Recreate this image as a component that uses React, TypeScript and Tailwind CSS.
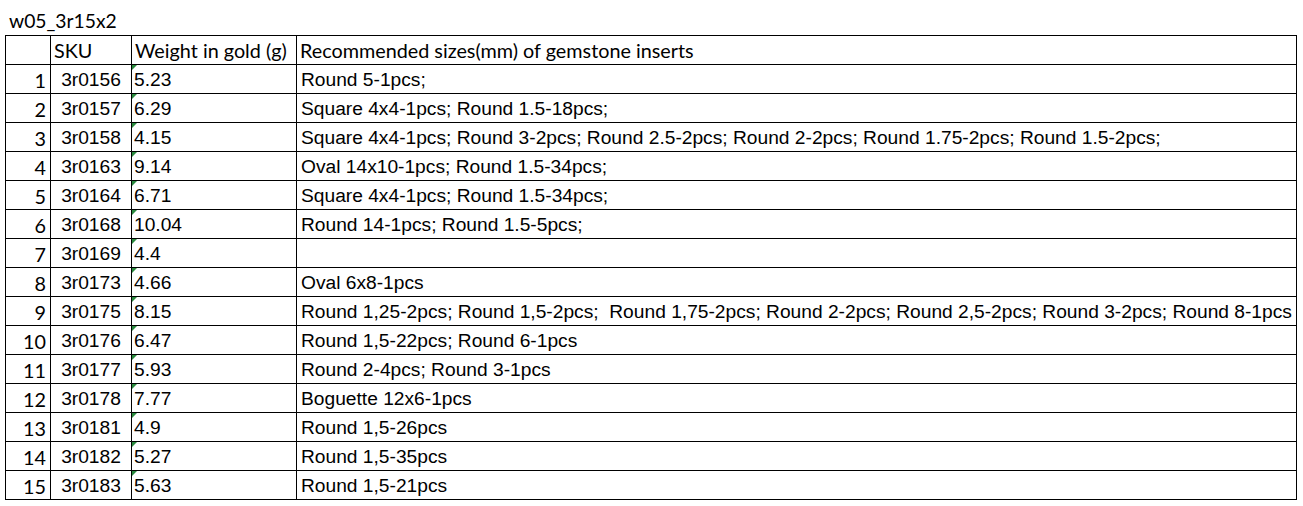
const rows: [string, string, string][] = [
  ["3r0156", "5.23", "Round 5-1pcs;"],
  ["3r0157", "6.29", "Square 4x4-1pcs; Round 1.5-18pcs;"],
  ["3r0158", "4.15", "Square 4x4-1pcs; Round 3-2pcs; Round 2.5-2pcs; Round 2-2pcs; Round 1.75-2pcs; Round 1.5-2pcs;"],
  ["3r0163", "9.14", "Oval 14x10-1pcs; Round 1.5-34pcs;"],
  ["3r0164", "6.71", "Square 4x4-1pcs; Round 1.5-34pcs;"],
  ["3r0168", "10.04", "Round 14-1pcs; Round 1.5-5pcs;"],
  ["3r0169", "4.4", ""],
  ["3r0173", "4.66", "Oval 6x8-1pcs"],
  ["3r0175", "8.15", "Round 1,25-2pcs; Round 1,5-2pcs;  Round 1,75-2pcs; Round 2-2pcs; Round 2,5-2pcs; Round 3-2pcs; Round 8-1pcs"],
  ["3r0176", "6.47", "Round 1,5-22pcs; Round 6-1pcs"],
  ["3r0177", "5.93", "Round 2-4pcs; Round 3-1pcs"],
  ["3r0178", "7.77", "Boguette 12x6-1pcs"],
  ["3r0181", "4.9", "Round 1,5-26pcs"],
  ["3r0182", "5.27", "Round 1,5-35pcs"],
  ["3r0183", "5.63", "Round 1,5-21pcs"],
]

// calibri stand-in for header / row numbers, arial for the data
const calibri = "font-['Lato','Open_Sans',sans-serif] text-[19.8px] leading-[22px]"
const arial = "font-['Liberation_Sans',Arial,sans-serif] text-[19.2px] leading-[22px]"

export default function App() {
  return (
    <div className="w-[1303px] h-[506px] bg-white text-black">
      <div className="h-[35px] pl-[9px] pt-[10px] font-['Lato','Open_Sans',sans-serif] text-[19.3px] leading-[22px]">w05_3r15x2</div>
      <div className="ml-[5px] w-[1292px] border-l border-t border-black">
        <div className="flex h-[29px] border-b border-black">
          <div className="w-[45px] border-r border-black" />
          <div className={`w-[81px] border-r border-black flex items-end pl-[3px] pb-[3px] ${calibri}`}>SKU</div>
          <div className={`w-[165px] border-r border-black flex items-end pl-[3px] pb-[3px] ${calibri}`}>Weight in gold (g)</div>
          <div className={`w-[1000px] border-r border-black flex items-end pl-[3px] pb-[3px] ${calibri}`}>Recommended sizes(mm) of gemstone inserts</div>
        </div>
        {rows.map(([sku, weight, sizes], i) => (
          <div key={sku} className="flex h-[29px] border-b border-black">
            <div className={`w-[45px] border-r border-black flex items-end justify-end pr-[4px] pb-[2px] ${calibri}`}>{i + 1}</div>
            <div className={`w-[81px] border-r border-black flex items-end justify-center pb-[2px] ${arial}`}>{sku}</div>
            <div className={`relative w-[165px] border-r border-black flex items-end pl-[2px] pb-[2px] ${arial}`}>
              <span className="absolute left-0 top-0 w-0 h-0 border-t-[5px] border-r-[5px] border-t-[#2a8a3e] border-r-transparent" />
              {weight}
            </div>
            <div className={`w-[1000px] border-r border-black flex items-end pl-[4px] pb-[2px] whitespace-pre ${arial}`}>{sizes}</div>
          </div>
        ))}
      </div>
    </div>
  )
}
